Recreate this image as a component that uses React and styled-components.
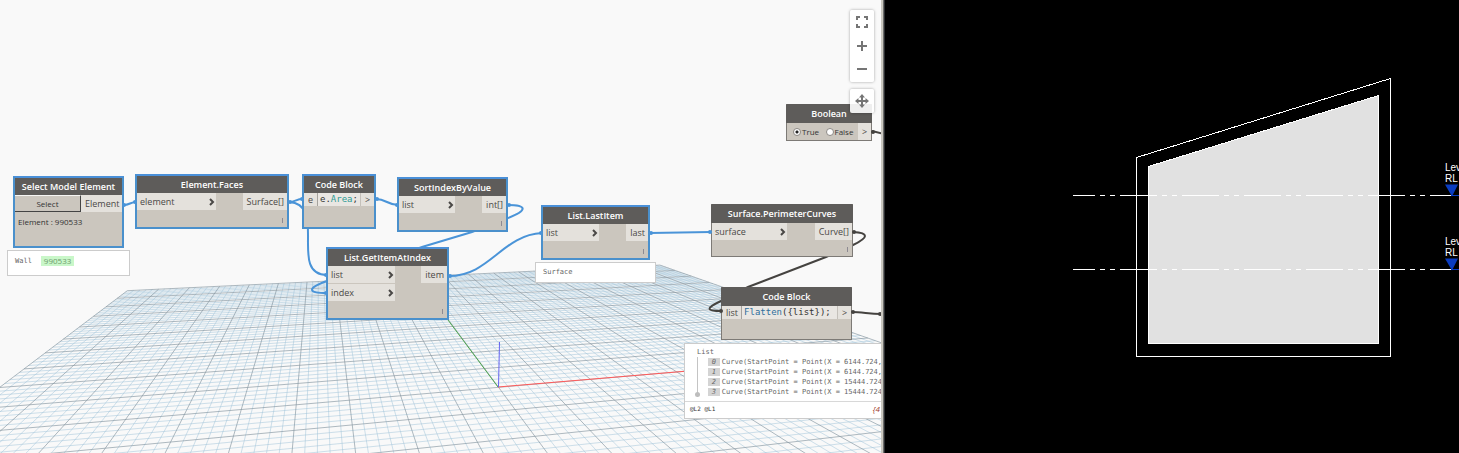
import React from "react";
import styled, { createGlobalStyle } from "styled-components";

const Global = createGlobalStyle`
  *, *::before, *::after { box-sizing: border-box; }
  html, body { margin: 0; background: #000; }
  body { font-family: "Open Sans", "Noto Sans", sans-serif; color: #4a4846; }
`;

const Split = styled.main`
  display: flex;
  min-height: 100vh;
  overflow: hidden;
`;

const GraphPane = styled.section`
  position: relative;
  flex: 0 0 60.4%;
  overflow: hidden;
  background: #f9f9f9;
`;

const Divider = styled.div`
  flex: 0 0 4px;
  background: linear-gradient(to right, #c9c7bf 0 2px, #6b6b69 2px 3px, #2a2d30 3px);
`;

const ModelPane = styled.section`
  position: relative;
  flex: 1 1 0;
  min-width: 0;
  overflow: hidden;
  background: #000;
`;

const Drawing = styled.svg`
  position: absolute;
  left: 0;
  top: 0;
  display: block;
`;

const NodeTitle = styled.h2`
  flex: none;
  height: 17px;
  margin: 0;
  background: #5e5c5a;
  color: #fff;
  font-size: 9px;
  line-height: 18px;
  font-weight: 600;
  text-align: center;
  white-space: nowrap;
`;

const NodeBox = styled.article`
  position: absolute;
  left: ${(p) => p.$x}px;
  top: ${(p) => p.$y}px;
  width: ${(p) => p.$w}px;
  height: ${(p) => p.$h}px;
  display: flex;
  flex-direction: column;
  background: #cbc6be;
  border: ${(p) => (p.$selected ? "2px solid #4a90cc" : "1px solid #7d7a76")};
  border-top-color: ${(p) => (p.$selected ? "#4a90d9" : "#5e5c5a")};

  ${NodeTitle} {
    height: ${(p) => (p.$selected ? 17 : 18)}px;
    margin: ${(p) => (p.$selected ? "0" : "0 -1px")};
  }
`;

const Ports = styled.div`
  display: flex;
  justify-content: space-between;
  align-items: flex-start;
`;

const PortColumn = styled.div`
  display: flex;
  flex-direction: column;
  gap: 1px;
`;

const Port = styled.div`
  display: flex;
  align-items: center;
  justify-content: space-between;
  width: ${(p) => (p.$w ? p.$w + "px" : "auto")};
  min-width: 13px;
  height: ${(p) => (p.$h || 17)}px;
  padding: ${(p) => (p.$w ? "0 1px 0 3px" : "0 3px 0 4px")};
  background: #e4e1dc;
  font-size: 9px;
  line-height: 16px;
  white-space: nowrap;
`;

const Code = styled.code`
  flex: 1;
  height: 13px;
  padding: 0 2px;
  border-left: 1px solid #a5a29d;
  border-right: 1px solid #c4c0ba;
  background: #e9e6e2;
  color: #333;
  font-family: "DejaVu Sans Mono", monospace;
  font-size: 9px;
  line-height: 13px;
  white-space: nowrap;
`;

const Token = styled.span`
  color: ${(p) => p.$color};
`;

const Lacing = styled.span`
  align-self: flex-end;
  width: 1px;
  height: 5px;
  margin: auto 4px 4px 0;
  background: #8d8a92;
`;

const SelectRow = styled.div`
  display: flex;
`;

const SelectButton = styled.button`
  flex: none;
  width: 66px;
  height: 17px;
  padding: 0;
  border: 1px solid #444;
  border-width: 1px 1px 1px 0;
  border-top-color: #f6f5f3;
  background: #cbc6be;
  color: #333;
  font: 8px/14px "Open Sans", sans-serif;
`;

const Note = styled.p`
  margin: 4px 3px;
  color: #333;
  font-size: 8px;
  line-height: 12px;
`;

const RadioRow = styled.div`
  display: flex;
  align-items: center;
  height: 17px;
  padding-left: 6px;
`;

const RadioLabel = styled.label`
  display: flex;
  align-items: center;
  gap: 1px;
  flex: 1;
  color: #333;
  font-size: 8px;
  line-height: 12px;
`;

const Radio = styled.input`
  appearance: none;
  width: 8px;
  height: 8px;
  margin: 0;
  border: 1px solid #8d8a86;
  border-radius: 50%;
  background: #fff;
  &:checked { background: radial-gradient(circle, #222 0 1px, #fff 2px); }
`;

const Bubble = styled.aside`
  position: absolute;
  left: ${(p) => p.$x}px;
  top: ${(p) => p.$y}px;
  width: ${(p) => p.$w}px;
  height: ${(p) => p.$h}px;
  border: 1px solid #ccc;
  background: #fff;
  color: #666;
  font-family: "DejaVu Sans Mono", monospace;
  font-size: 7px;
  line-height: 9px;
  white-space: nowrap;
`;

const BubbleLine = styled.div`
  display: flex;
  align-items: center;
  gap: 9px;
  padding: 5px 7px;
`;

const IdTag = styled.a`
  padding: 0 3px;
  background: #c9f7c9;
  color: #6f9c6f;
  font: 8px/10px "Open Sans", sans-serif;
  text-decoration: none;
`;

const ListHead = styled.div`
  padding: 4px 12px 0;
`;

const Items = styled.ol`
  position: relative;
  margin: 0 0 0 12px;
  padding: 0 0 0 10px;
  border-left: 1px solid #c4c4c4;
  list-style: none;

  &::after {
    content: "";
    position: absolute;
    left: -3px;
    bottom: 0;
    width: 5px;
    height: 5px;
    border-radius: 50%;
    background: #bdbdbd;
  }
`;

const Item = styled.li`
  display: flex;
  align-items: center;
  gap: 2px;
  height: 10px;
  line-height: 10px;
`;

const Index = styled.span`
  width: 12px;
  height: 8px;
  background: #d4d4d4;
  line-height: 8px;
  font-style: italic;
  text-align: center;
`;

const ListFoot = styled.footer`
  display: flex;
  justify-content: space-between;
  margin-top: 4px;
  padding: 2px 2px 0 5px;
  border-top: 1px solid #d8d8d8;
  color: #333;
  font-size: 6px;
`;

const Count = styled.span`
  color: #a0402c;
  font: italic 8px/10px "Open Sans", sans-serif;
`;

const Tools = styled.nav`
  position: absolute;
  right: 7px;
  top: 10px;
  display: flex;
  flex-direction: column;
  gap: 7px;
`;

const ToolGroup = styled.div`
  display: flex;
  flex-direction: column;
  width: 24px;
  border-radius: 2px;
  background: rgba(255, 255, 255, 0.9);
  box-shadow: 0 0 3px rgba(0, 0, 0, 0.35);
`;

const ToolButton = styled.button`
  display: grid;
  place-items: center;
  height: 24px;
  padding: 0;
  border: 0;
  background: none;
  color: #757575;
`;

// Ground grid: a 20 x 20 plane of major cells seen in two-point perspective.
const ORIGIN = [127.3, 290.7];
const VX = [3493, 129];
const VY = [319, 145.5];
const KX = 0.0094;
const KY = -0.05;

const weight = (t, s) => 1 + KX * t + KY * s;
const project = (t, s) =>
  [0, 1]
    .map((i) => ((ORIGIN[i] + t * KX * VX[i] + s * KY * VY[i]) / weight(t, s)).toFixed(1))
    .join(" ");

function gridPath(major) {
  const parts = [];
  for (let i = 0; i <= 100; i++) {
    if ((i % 5 === 0) !== major) continue;
    const k = i / 5;
    const sEnd = Math.min(20, (0.95 + KX * k) / -KY);
    parts.push(`M${project(k, 0)}L${project(k, sEnd)}`);
    const tStart = Math.max(0, (0.05 - 1 - KY * k) / KX);
    if (tStart < 20) parts.push(`M${project(tStart, k)}L${project(20, k)}`);
  }
  return parts.join("");
}

const MINOR = gridPath(false);
const MAJOR = gridPath(true);

const WIRES = [
  "M124 205C129 205 131 202 136 202",
  "M289 202C295 202 297 199 302 199",
  "M289 202C328 204 288 275 327 275",
  "M376 199C386 199 388 205 398 205",
  "M508 205C526 205 529 210 508 218L472 232L422 247L327 281C307 288 307 293 327 293",
  "M449 276C490 276 502 235 542 233",
  "M650 233L711 232",
];
const DARK_WIRES = [
  "M853 232C869 233 869 237 853 245L826 257L748 287L721 301C706 308 705 311 722 311",
  "M852 312C862 312 870 314 882 314",
  "M872 131L884 134",
];
const PORT_DOTS = [[124, 205], [135, 202], [290, 202], [302, 199], [377, 199], [397, 205], [509, 205], [326, 275], [326, 293], [450, 276], [541, 233], [651, 233], [710, 232]];
const DARK_DOTS = [[854, 232], [721, 311], [853, 312], [880, 314], [873, 132]];

function Background() {
  return (
    <Drawing width="1459" height="453" aria-hidden="true" fill="none">
      <path d={MINOR} stroke="#9fc4da" strokeOpacity="0.5" />
      <path d={MAJOR} stroke="#84959f" strokeOpacity="0.65" />
      <path d="M498 387L448 320" stroke="#4fa64f" />
      <path d="M498 387L700 370" stroke="#ff5a5a" />
      <path d="M498.5 387L499.5 342" stroke="#6464f0" />
      <g stroke="#4a94d8" strokeWidth="2">
        {WIRES.map((d) => <path key={d} d={d} />)}
      </g>
      <g stroke="#454340" strokeWidth="2">
        {DARK_WIRES.map((d) => <path key={d} d={d} />)}
      </g>
    </Drawing>
  );
}

function PortDots() {
  return (
    <Drawing width="1459" height="453" aria-hidden="true">
      {PORT_DOTS.map(([x, y]) => <circle key={x + "-" + y} cx={x} cy={y} r="2" fill="#4a94d8" />)}
      {DARK_DOTS.map(([x, y]) => <circle key={x + "-" + y} cx={x} cy={y} r="2" fill="#454340" />)}
    </Drawing>
  );
}

const Chevron = () => (
  <svg width="6" height="8" viewBox="0 0 6 8" fill="none" stroke="#4a4846" strokeWidth="2" aria-hidden="true">
    <path d="M1 1L4 4L1 7" />
  </svg>
);

function FunctionNode({ title, inputs, output, inputWidth, ...box }) {
  return (
    <NodeBox {...box}>
      <NodeTitle>{title}</NodeTitle>
      <Ports>
        <PortColumn>
          {inputs.map((name) => (
            <Port key={name} $w={inputWidth}>{name}<Chevron /></Port>
          ))}
        </PortColumn>
        <Port>{output}</Port>
      </Ports>
      <Lacing />
    </NodeBox>
  );
}

const CURVES = ["6144.724,", "6144.724,", "15444.724", "15444.724"];

function Level({ y }) {
  return (
    <g>
      <path d={`M188 ${y}H568`} stroke="#fff" strokeDasharray="37 5 5 5 5 5" strokeDashoffset="15" />
      <path d={`M560 ${y - 11}h13l-6 12z`} fill="#0a3cc0" />
      <path d={`M566 ${y}h10`} stroke="#0a3cc0" />
      <g fill="#fff" fontFamily="Liberation Sans, sans-serif" fontSize="10">
        <text x="560" y={y - 25}>Lev</text>
        <text x="560" y={y - 14}>RL</text>
      </g>
    </g>
  );
}

export default function App() {
  return (
    <>
      <Global />
      <Split>
        <GraphPane>
          <Background />
          <NodeBox $x={13} $y={176} $w={111} $h={72} $selected>
            <NodeTitle>Select Model Element</NodeTitle>
            <SelectRow>
              <SelectButton type="button">Select</SelectButton>
              <Port>Element</Port>
            </SelectRow>
            <Note>Element : 990533</Note>
          </NodeBox>
          <Bubble $x={7} $y={250} $w={123} $h={26}>
            <BubbleLine>Wall<IdTag href="#990533">990533</IdTag></BubbleLine>
          </Bubble>

          <FunctionNode $x={135} $y={174} $w={154} $h={55} $selected title="Element.Faces" inputs={["element"]} output="Surface[]" inputWidth={79} />

          <NodeBox $x={302} $y={174} $w={74} $h={55} $selected>
            <NodeTitle>Code Block</NodeTitle>
            <Ports>
              <Port $h={13}>e</Port>
              <Code>e.<Token $color="#2f9c95">Area</Token>;</Code>
              <Port $h={13}>&gt;</Port>
            </Ports>
          </NodeBox>

          <FunctionNode $x={397} $y={177} $w={111} $h={55} $selected title="SortIndexByValue" inputs={["list"]} output="int[]" inputWidth={56} />
          <FunctionNode $x={326} $y={247} $w={123} $h={73} $selected title="List.GetItemAtIndex" inputs={["list", "index"]} output="item" inputWidth={67} />
          <FunctionNode $x={541} $y={205} $w={109} $h={55} $selected title="List.LastItem" inputs={["list"]} output="last" inputWidth={56} />
          <Bubble $x={535} $y={262} $w={121} $h={21}>
            <BubbleLine>Surface</BubbleLine>
          </Bubble>
          <FunctionNode $x={711} $y={204} $w={142} $h={53} title="Surface.PerimeterCurves" inputs={["surface"]} output="Curve[]" inputWidth={75} />

          <NodeBox $x={721} $y={287} $w={131} $h={53}>
            <NodeTitle>Code Block</NodeTitle>
            <Ports>
              <Port $h={13}>list</Port>
              <Code><Token $color="#2f6f9c">Flatten</Token>({"{list}"});</Code>
              <Port $h={13}>&gt;</Port>
            </Ports>
          </NodeBox>
          <Bubble $x={684} $y={343} $w={199} $h={76}>
            <ListHead>List</ListHead>
            <Items>
              {CURVES.map((x, i) => (
                <Item key={i}><Index>{i}</Index>Curve(StartPoint = Point(X = {x}</Item>
              ))}
            </Items>
            <ListFoot><span>@L2 @L1</span><Count>{"{4"}</Count></ListFoot>
          </Bubble>

          <NodeBox $x={786} $y={104} $w={86} $h={37}>
            <NodeTitle>Boolean</NodeTitle>
            <RadioRow>
              <RadioLabel><Radio type="radio" name="boolean" defaultChecked />True</RadioLabel>
              <RadioLabel><Radio type="radio" name="boolean" />False</RadioLabel>
              <Port>&gt;</Port>
            </RadioRow>
          </NodeBox>
          <PortDots />

          <Tools>
            <ToolGroup>
              <ToolButton type="button" aria-label="Fit view">
                <svg width="12" height="12" fill="none" stroke="currentColor" strokeWidth="2"><path d="M1 4V1H4M8 1H11V4M11 8V11H8M4 11H1V8" /></svg>
              </ToolButton>
              <ToolButton type="button" aria-label="Zoom in">
                <svg width="10" height="10" stroke="currentColor" strokeWidth="2"><path d="M5 0V10M0 5H10" /></svg>
              </ToolButton>
              <ToolButton type="button" aria-label="Zoom out">
                <svg width="10" height="10" stroke="currentColor" strokeWidth="2"><path d="M0 4H10" /></svg>
              </ToolButton>
            </ToolGroup>
            <ToolGroup>
              <ToolButton type="button" aria-label="Pan">
                <svg width="14" height="14" fill="currentColor"><path d="M6 3.500H4L7 0L10 3.500H8V6H10.500V4L14 7L10.500 10V8H8V10.500H10L7 14L4 10.500H6V8H3.500V10L0 7L3.500 4V6H6Z" /></svg>
              </ToolButton>
            </ToolGroup>
          </Tools>
        </GraphPane>
        <Divider />
        <ModelPane>
          <Drawing width="100%" height="453" role="img" aria-label="Wall elevation">
            <g shapeRendering="crispEdges" fill="none">
              <path d="M251.500 157.500L505.500 78.500V356.500H251.500Z" stroke="#fff" />
              <path d="M263.500 166.500L493.500 95.500V343.500H263.500Z" fill="#e1e1e1" stroke="#fff" />
            </g>
            <Level y={195.5} />
            <Level y={269.5} />
          </Drawing>
        </ModelPane>
      </Split>
    </>
  );
}
